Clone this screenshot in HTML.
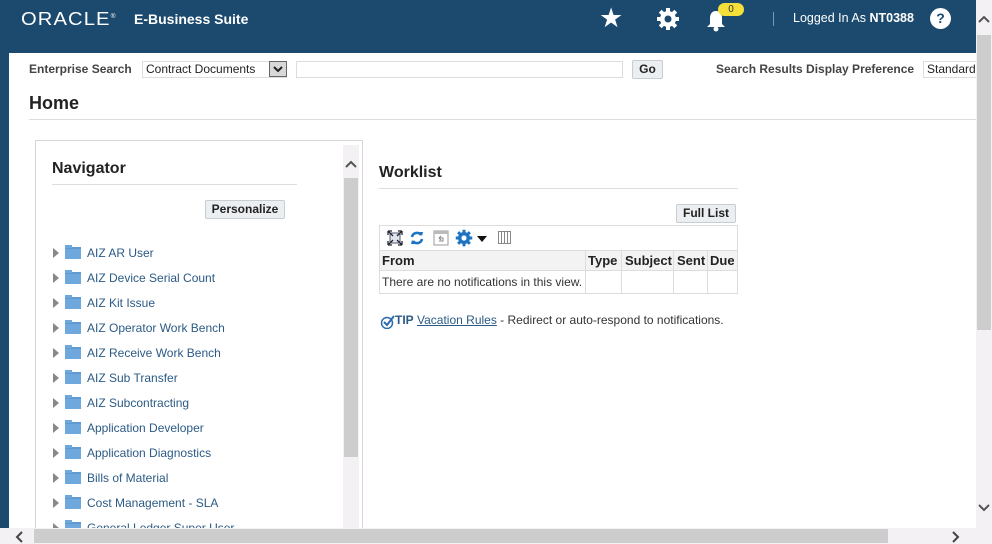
<!DOCTYPE html>
<html><head><meta charset="utf-8"><style>
*{margin:0;padding:0;box-sizing:border-box}
body{width:992px;height:544px;overflow:hidden;background:#fff;font-family:"Liberation Sans",Arial,sans-serif;position:relative}
.a{position:absolute}
.hdr{left:0;top:0;width:976px;height:53px;background:#1b4a6e}
.lstrip{left:0;top:0;width:9px;height:544px;background:#1b4a6e}
.t{font-size:12px;color:#333;white-space:nowrap}
.b{font-weight:bold}
.nav{left:35px;top:140px;width:328px;height:400px;border:1px solid #d6d6d6;border-bottom:none}
.item{position:absolute;left:53px;font-size:12px;color:#2b5a85;white-space:nowrap;height:16px}
.item .tri{position:absolute;left:0;top:3px;width:0;height:0;border-left:6px solid #888;border-top:5px solid transparent;border-bottom:5px solid transparent}
.item .fd{position:absolute;left:12px;top:2px;width:16px;height:12px;background:#6ea8dc;border-top:2px solid #5f9ad2}
.item .fd:before{content:"";position:absolute;left:0;top:-4px;width:7px;height:3px;background:#6ea8dc}
.item span{position:absolute;left:34px;top:1px}
.btn{background:#eceff2;border:1px solid #c8cdd2;border-radius:2px;font-size:12px;font-weight:bold;color:#222;text-align:center}
</style></head><body>
<div class="a hdr"></div>
<div class="a lstrip"></div>
<div class="a" style="left:21px;top:9px;color:#fff;font-size:18px;letter-spacing:1px;transform:scaleX(1.12);transform-origin:left">ORACLE<sup style="font-size:6px">®</sup></div>
<div class="a" style="left:134px;top:11px;color:#fff;font-size:14px;font-weight:bold">E-Business Suite</div>
<div class="a" style="left:599px;top:3px;color:#fff;font-size:27px">★</div>
<svg class="a" style="left:656px;top:7px" width="24" height="24" viewBox="0 0 24 24"><g fill="#fff"><circle cx="12" cy="12" r="8"/><rect x="10" y="1" width="4" height="22"/><rect x="1" y="10" width="22" height="4"/><rect x="10" y="1" width="4" height="22" transform="rotate(45 12 12)"/><rect x="10" y="1" width="4" height="22" transform="rotate(-45 12 12)"/></g><circle cx="12" cy="12" r="3.5" fill="#1b4a6e"/></svg>
<svg class="a" style="left:706px;top:10px" width="20" height="22" viewBox="0 0 20 22"><path d="M10 1C6 1 4 4 4 8v6l-3 3h18l-3-3V8c0-4-2-7-6-7z" fill="#fff"/><circle cx="10" cy="19" r="2.5" fill="#fff"/></svg>
<div class="a" style="left:718px;top:3px;width:26px;height:13px;background:#f5e03a;border-radius:7px;font-size:10px;text-align:center;color:#333;line-height:13px">0</div>
<div class="a" style="left:773px;top:12px;width:1px;height:14px;background:#7a9ab4"></div>
<div class="a" style="left:793px;top:11px;color:#fff;font-size:12.5px">Logged In As <b>NT0388</b></div>
<div class="a" style="left:930px;top:8px;width:21px;height:21px;border-radius:50%;background:#fff;color:#1b4a6e;font-weight:bold;font-size:14px;text-align:center;line-height:21px">?</div>

<div class="a t b" style="left:29px;top:62px;color:#444">Enterprise Search</div>
<div class="a" style="left:142px;top:61px;width:145px;height:17px;border:1px solid #ddd;font-size:12px;color:#222;padding:0 3px;line-height:15px">Contract Documents</div>
<div class="a" style="left:269px;top:61px;width:18px;height:16px;background:#d8d8d8;border:1px solid #666"><svg width="16" height="14" viewBox="0 0 16 14"><path d="M4 5l4 4 4-4" stroke="#222" stroke-width="2" fill="none"/></svg></div>
<div class="a" style="left:296px;top:61px;width:327px;height:17px;border:1px solid #ddd"></div>
<div class="btn a" style="left:632px;top:60px;width:31px;height:19px;line-height:17px">Go</div>
<div class="a t b" style="left:716px;top:62px;color:#444">Search Results Display Preference</div>
<div class="a" style="left:923px;top:61px;width:55px;height:17px;border:1px solid #ddd;border-right:none;font-size:12px;color:#222;padding-left:3px;line-height:15px;overflow:hidden">Standard</div>
<div class="a" style="left:29px;top:93px;font-size:18px;font-weight:bold;color:#222">Home</div>
<div class="a" style="left:29px;top:119px;width:947px;height:1px;background:#ddd"></div>

<div class="a nav"></div>
<div class="a" style="left:52px;top:160px;font-size:16px;font-weight:bold;color:#222">Navigator</div>
<div class="a" style="left:52px;top:184px;width:245px;height:1px;background:#ddd"></div>
<div class="btn a" style="left:205px;top:200px;width:80px;height:19px;line-height:17px">Personalize</div>
<div class="a" style="left:343px;top:145px;width:16px;height:383px;background:#f3f1f4"></div>
<div class="a" style="left:344px;top:178px;width:14px;height:279px;background:#cdcdcd"></div>
<svg class="a" style="left:344px;top:160px" width="14" height="10" viewBox="0 0 14 10"><path d="M2 7l5-5 5 5" stroke="#555" stroke-width="2" fill="none"/></svg>

<div class="item" style="top:245px"><i class="tri"></i><i class="fd"></i><span>AIZ AR User</span></div>
<div class="item" style="top:270px"><i class="tri"></i><i class="fd"></i><span>AIZ Device Serial Count</span></div>
<div class="item" style="top:295px"><i class="tri"></i><i class="fd"></i><span>AIZ Kit Issue</span></div>
<div class="item" style="top:320px"><i class="tri"></i><i class="fd"></i><span>AIZ Operator Work Bench</span></div>
<div class="item" style="top:345px"><i class="tri"></i><i class="fd"></i><span>AIZ Receive Work Bench</span></div>
<div class="item" style="top:370px"><i class="tri"></i><i class="fd"></i><span>AIZ Sub Transfer</span></div>
<div class="item" style="top:395px"><i class="tri"></i><i class="fd"></i><span>AIZ Subcontracting</span></div>
<div class="item" style="top:420px"><i class="tri"></i><i class="fd"></i><span>Application Developer</span></div>
<div class="item" style="top:445px"><i class="tri"></i><i class="fd"></i><span>Application Diagnostics</span></div>
<div class="item" style="top:470px"><i class="tri"></i><i class="fd"></i><span>Bills of Material</span></div>
<div class="item" style="top:495px"><i class="tri"></i><i class="fd"></i><span>Cost Management - SLA</span></div>
<div class="item" style="top:520px"><i class="tri"></i><i class="fd"></i><span>General Ledger Super User</span></div>

<div class="a" style="left:379px;top:164px;font-size:16px;font-weight:bold;color:#222">Worklist</div>
<div class="a" style="left:379px;top:188px;width:359px;height:1px;background:#ddd"></div>
<div class="btn a" style="left:676px;top:204px;width:60px;height:19px;line-height:17px">Full List</div>
<div class="a" style="left:379px;top:225px;width:359px;height:69px;border:1px solid #ddd"></div>
<svg class="a" style="left:387px;top:230px" width="16" height="16" viewBox="0 0 16 16"><rect x="3" y="3" width="10" height="10" fill="#dfe6ee" stroke="#556" stroke-width="1"/><path d="M1 1l5 5M15 1l-5 5M1 15l5-5M15 15l-5-5M1 1h4M1 1v4M15 1h-4M15 1v4M1 15h4M1 15v-4M15 15h-4M15 15v-4" stroke="#223" stroke-width="1.3" fill="none"/></svg>
<svg class="a" style="left:409px;top:230px" width="16" height="16" viewBox="0 0 16 16"><path d="M3 7a5 5 0 0 1 9-2M13 9a5 5 0 0 1-9 2" stroke="#1e73c2" stroke-width="2.5" fill="none"/><path d="M10 2l4 0-1 4zM6 14l-4 0 1-4z" fill="#1e73c2"/></svg>
<svg class="a" style="left:433px;top:230px" width="16" height="16" viewBox="0 0 16 16"><rect x="1" y="1" width="14" height="14" fill="none" stroke="#999"/><rect x="1" y="1" width="14" height="3" fill="#bbb"/><path d="M6 11h4v-3H6M6 8l2-2M6 8l2 2" stroke="#888" fill="none"/></svg>
<svg class="a" style="left:455px;top:229px" width="18" height="18" viewBox="0 0 24 24"><g fill="#1e73c2"><circle cx="12" cy="12" r="8"/><rect x="10" y="1" width="4" height="22"/><rect x="1" y="10" width="22" height="4"/><rect x="10" y="1" width="4" height="22" transform="rotate(45 12 12)"/><rect x="10" y="1" width="4" height="22" transform="rotate(-45 12 12)"/></g><circle cx="12" cy="12" r="3.5" fill="#fff"/></svg>
<div class="a" style="left:477px;top:236px;width:0;height:0;border-left:5px solid transparent;border-right:5px solid transparent;border-top:6px solid #111"></div>
<div class="a" style="left:498px;top:231px;width:13px;height:13px;border:1px solid #888;background:repeating-linear-gradient(90deg,#fff 0 2px,#888 2px 3px)"></div>
<div class="a" style="left:380px;top:250px;width:357px;height:21px;background:#f3f3f3;border-top:1px solid #ddd;border-bottom:1px solid #ddd"></div>
<div class="a t b" style="left:382px;top:253px;font-size:13px;color:#222">From</div>
<div class="a t b" style="left:588px;top:253px;font-size:13px;color:#222">Type</div>
<div class="a t b" style="left:625px;top:253px;font-size:13px;color:#222">Subject</div>
<div class="a t b" style="left:677px;top:253px;font-size:13px;color:#222">Sent</div>
<div class="a t b" style="left:710px;top:253px;font-size:13px;color:#222">Due</div>
<div class="a" style="left:585px;top:250px;width:1px;height:43px;background:#ddd"></div>
<div class="a" style="left:621px;top:250px;width:1px;height:43px;background:#ddd"></div>
<div class="a" style="left:673px;top:250px;width:1px;height:43px;background:#ddd"></div>
<div class="a" style="left:707px;top:250px;width:1px;height:43px;background:#ddd"></div>
<div class="a t" style="left:382px;top:275px">There are no notifications in this view.</div>
<svg class="a" style="left:380px;top:315px" width="15" height="14" viewBox="0 0 15 14"><circle cx="7" cy="8" r="5.5" fill="none" stroke="#2b6cb0" stroke-width="1.5"/><path d="M4 7l3 3 7-9" stroke="#2b6cb0" stroke-width="2" fill="none"/></svg>
<div class="a t" style="left:395px;top:313px"><b style="color:#2b5a85">TIP</b> <u style="color:#2b5a85">Vacation Rules</u> - Redirect or auto-respond to notifications.</div>

<div class="a" style="left:976px;top:0;width:16px;height:528px;background:#f3f1f4"></div>
<div class="a" style="left:977px;top:35px;width:14px;height:295px;background:#cdcdcd"></div>
<svg class="a" style="left:977px;top:15px" width="14" height="10" viewBox="0 0 14 10"><path d="M2 7l5-5 5 5" stroke="#555" stroke-width="2" fill="none"/></svg>
<svg class="a" style="left:977px;top:502px" width="14" height="10" viewBox="0 0 14 10"><path d="M2 3l5 5 5-5" stroke="#555" stroke-width="2" fill="none"/></svg>
<div class="a" style="left:0;top:528px;width:992px;height:16px;background:#f3f1f4"></div>
<div class="a" style="left:34px;top:529px;width:854px;height:14px;background:#cdcdcd"></div>
<svg class="a" style="left:15px;top:530px" width="10" height="14" viewBox="0 0 10 14"><path d="M7 2l-5 5 5 5" stroke="#444" stroke-width="2" fill="none"/></svg>
<svg class="a" style="left:950px;top:530px" width="10" height="14" viewBox="0 0 10 14"><path d="M3 2l5 5-5 5" stroke="#444" stroke-width="2" fill="none"/></svg>
</body></html>
